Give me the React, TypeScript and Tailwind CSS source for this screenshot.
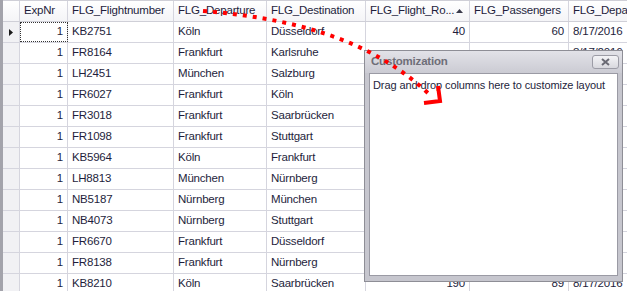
import React from "react";

type Row = {
  nr: number;
  flight: string;
  dep: string;
  dest: string;
  route?: number;
  pax?: number;
  date: string;
};

const rows: Row[] = [
  { nr: 1, flight: "KB2751", dep: "Köln", dest: "Düsseldorf", route: 40, pax: 60, date: "8/17/2016" },
  { nr: 1, flight: "FR8164", dep: "Frankfurt", dest: "Karlsruhe", date: "8/17/2016" },
  { nr: 1, flight: "LH2451", dep: "München", dest: "Salzburg", date: "8/17/2016" },
  { nr: 1, flight: "FR6027", dep: "Frankfurt", dest: "Köln", date: "8/17/2016" },
  { nr: 1, flight: "FR3018", dep: "Frankfurt", dest: "Saarbrücken", date: "8/17/2016" },
  { nr: 1, flight: "FR1098", dep: "Frankfurt", dest: "Stuttgart", date: "8/17/2016" },
  { nr: 1, flight: "KB5964", dep: "Köln", dest: "Frankfurt", date: "8/17/2016" },
  { nr: 1, flight: "LH8813", dep: "München", dest: "Nürnberg", date: "8/17/2016" },
  { nr: 1, flight: "NB5187", dep: "Nürnberg", dest: "München", date: "8/17/2016" },
  { nr: 1, flight: "NB4073", dep: "Nürnberg", dest: "Stuttgart", date: "8/17/2016" },
  { nr: 1, flight: "FR6670", dep: "Frankfurt", dest: "Düsseldorf", date: "8/17/2016" },
  { nr: 1, flight: "FR8138", dep: "Frankfurt", dest: "Nürnberg", date: "8/17/2016" },
  { nr: 1, flight: "KB8210", dep: "Köln", dest: "Saarbrücken", route: 190, pax: 89, date: "8/17/2016" },
];

const cell = "h-full shrink-0 border-r border-[#d5d5de] px-[4px] flex items-center whitespace-nowrap overflow-hidden";

export default function App() {
  return (
    <div
      className="relative w-[627px] h-[291px] overflow-hidden bg-white text-[11.5px] tracking-[-0.2px] text-[#1e1e3c]"
      style={{ fontFamily: "'Liberation Sans', Arial, sans-serif" }}
    >
      <div className="flex h-full">
        <div className="w-[3px] shrink-0 bg-[#a3a3ab]" />
        <div className="flex flex-col flex-1 min-w-0">
          {/* header */}
          <div className="flex h-[22px] shrink-0 border-t border-b border-[#cfcfd7] bg-gradient-to-b from-white to-[#f4f4f7]">
            <div className={`${cell} w-[17px]`} />
            <div className={`${cell} w-[48px]`}>ExpNr</div>
            <div className={`${cell} w-[106px]`}>FLG_Flightnumber</div>
            <div className={`${cell} w-[93px]`}>FLG_Departure</div>
            <div className={`${cell} w-[99px]`}>FLG_Destination</div>
            <div className={`${cell} w-[104px] justify-between`}>
              <span>FLG_Flight_Ro...</span>
              <svg width="7" height="4" viewBox="0 0 7 4" className="mr-[2px] shrink-0">
                <path d="M0 4 L3.5 0 L7 4 Z" fill="#3a3a4a" />
              </svg>
            </div>
            <div className={`${cell} w-[99px]`}>FLG_Passengers</div>
            <div className={`${cell} w-[80px]`}>FLG_Departure</div>
          </div>

          {rows.map((r, i) => (
            <div key={i} className="flex h-[21px] shrink-0 border-b border-[#d5d5de]">
              <div className={`${cell} w-[17px] bg-[#f1f1f4] justify-center`}>
                {i === 0 && (
                  <svg width="4" height="7" viewBox="0 0 4 7">
                    <path d="M0 0 L4 3.5 L0 7 Z" fill="#1a1a1a" />
                  </svg>
                )}
              </div>
              <div
                className={`${cell} w-[48px] justify-end ${
                  i === 0 ? "outline-1 outline-dotted outline-[#333] -outline-offset-1" : ""
                }`}
              >
                {r.nr}
              </div>
              <div className={`${cell} w-[106px]`}>{r.flight}</div>
              <div className={`${cell} w-[93px]`}>{r.dep}</div>
              <div className={`${cell} w-[99px]`}>{r.dest}</div>
              <div className={`${cell} w-[104px] justify-end`}>{r.route}</div>
              <div className={`${cell} w-[99px] justify-end`}>{r.pax}</div>
              <div className={`${cell} w-[80px]`}>{r.date}</div>
            </div>
          ))}
        </div>
      </div>

      {/* customization window */}
      <div className="absolute left-[364px] top-[50px] w-[259px] h-[232px] border border-[#8e8e96] bg-[#c6c6ce] flex flex-col">
        <div className="h-[22px] shrink-0 flex items-center justify-between pl-[6px] pr-[3px] bg-gradient-to-b from-[#e2e2e8] to-[#cbcbd3]">
          <span className="font-bold text-[#6e6e78]">Customization</span>
          <div className="w-[27px] h-[14px] rounded-[3px] border border-[#9c9ca6] bg-gradient-to-b from-[#f4f4f7] to-[#d8d8de] flex items-center justify-center">
            <svg width="9" height="8" viewBox="0 0 9 8">
              <path d="M1 1 L8 7 M8 1 L1 7" stroke="#6a6a74" strokeWidth="2" />
            </svg>
          </div>
        </div>
        <div className="flex-1 mx-[4px] mb-[5px] border border-[#9a9aa4] bg-white pl-[3px] pt-[3px] whitespace-nowrap text-[11px] tracking-[-0.1px]">
          Drag and drop columns here to customize layout
        </div>
      </div>

      {/* drag arrow */}
      <svg className="absolute inset-0 pointer-events-none" width="627" height="291">
        <path
          d="M203 11 C 290 18, 372 38, 432 97"
          fill="none"
          stroke="#ff0000"
          strokeWidth="4"
          strokeDasharray="4 6"
        />
        <polyline points="424,103 440,101 438,86" fill="none" stroke="#ff0000" strokeWidth="4" />
      </svg>
    </div>
  );
}
